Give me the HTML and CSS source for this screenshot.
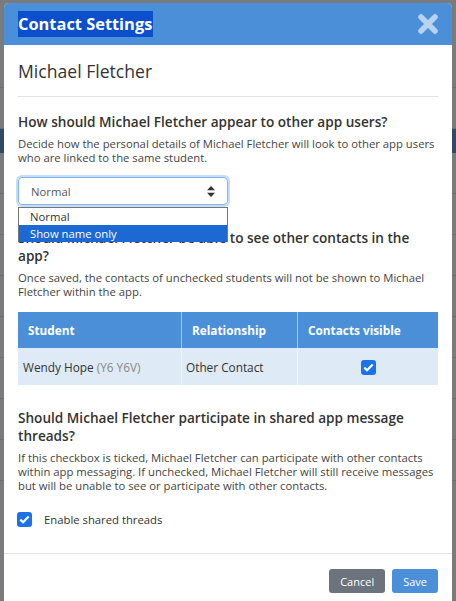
FILE: index.html
```html
<!DOCTYPE html>
<html lang="en">
<head>
    <meta charset="UTF-8">
    <meta name="viewport" content="width=device-width, initial-scale=1.0">
    <title>Contact Settings</title>
    <link rel="stylesheet" href="styles.css">
</head>
<body>
    <div class="backdrop">
        <div class="bg-row tall"></div>
        <div class="bg-row"></div>
        <div class="bg-row band"></div>
        <div class="bg-row"></div>
        <div class="bg-row"></div>
        <div class="bg-row"></div>
        <div class="bg-row"></div>
        <div class="bg-row"></div>
        <div class="bg-row"></div>
        <div class="bg-row"></div>
        <div class="bg-row"></div>
    </div>

    <div class="modal">
        <div class="modal-header">
            <span class="modal-title">Contact Settings</span>
            <svg class="close-icon" width="22" height="22" viewBox="0 0 22 22">
                <path d="M4 4 L18 18 M18 4 L4 18" stroke="#b8d2f0" stroke-width="5.5" stroke-linecap="round"/>
            </svg>
        </div>

        <div class="modal-body">
            <h2 class="contact-name">Michael Fletcher</h2>
            <hr>

            <h3>How should Michael Fletcher appear to other app users?</h3>
            <p>Decide how the personal details of Michael Fletcher will look to other app users who are linked to the same student.</p>

            <div class="select-wrap">
                <div class="select">
                    <span>Normal</span>
                    <svg width="8" height="11" viewBox="0 0 8 11">
                        <path d="M4 0 L8 4.2 L0 4.2 Z M0 6.8 L8 6.8 L4 11 Z" fill="#333"/>
                    </svg>
                </div>
                <ul class="options">
                    <li>Normal</li>
                    <li class="selected">Show name only</li>
                </ul>
            </div>

            <h3 class="second">Should Michael Fletcher be able to see other contacts in the app?</h3>
            <p>Once saved, the contacts of unchecked students will not be shown to Michael Fletcher within the app.</p>

            <table class="students">
                <thead>
                    <tr>
                        <th class="col-student">Student</th>
                        <th class="col-rel">Relationship</th>
                        <th class="col-vis">Contacts visible</th>
                    </tr>
                </thead>
                <tbody>
                    <tr>
                        <td class="col-student">Wendy Hope <span class="muted">(Y6 Y6V)</span></td>
                        <td class="col-rel">Other Contact</td>
                        <td class="col-vis center"><span class="check"><svg width="11" height="9" viewBox="0 0 11 9"><path d="M1.3 4.6 L4.1 7.3 L9.7 1.5" stroke="#fff" stroke-width="2.2" fill="none"/></svg></span></td>
                    </tr>
                </tbody>
            </table>

            <h3 class="third">Should Michael Fletcher participate in shared app message threads?</h3>
            <p>If this checkbox is ticked, Michael Fletcher can participate with other contacts within app messaging. If unchecked, Michael Fletcher will still receive messages but will be unable to see or participate with other contacts.</p>

            <label class="check-row">
                <span class="check"><svg width="11" height="9" viewBox="0 0 11 9"><path d="M1.3 4.6 L4.1 7.3 L9.7 1.5" stroke="#fff" stroke-width="2.2" fill="none"/></svg></span>
                Enable shared threads
            </label>
        </div>

        <div class="modal-footer">
            <button class="btn btn-cancel">Cancel</button>
            <button class="btn btn-save">Save</button>
        </div>
    </div>
</body>
</html>
```

FILE: styles.css
```css
body {
    margin: 0;
    padding: 0;
    height: 601px;
    overflow: hidden;
    background-color: #7a7b7c;
    font-family: 'Open Sans', sans-serif;
    color: #333;
}

.backdrop {
    display: flex;
    flex-direction: column;
}

.bg-row {
    height: 40px;
    border-bottom: 1px solid #6d6e70;
}

.bg-row.tall {
    height: 87px;
}

.bg-row.band {
    height: 24px;
    background-color: #2f4a68;
    border-bottom: 0;
}

.modal {
    position: absolute;
    top: 3px;
    left: 4px;
    width: 448px;
    height: 620px;
    background-color: #fff;
    border-radius: 5px;
    overflow: hidden;
    display: flex;
    flex-direction: column;
}

.modal-header {
    height: 42px;
    background-color: #4a8fd7;
    padding: 0 14px;
    display: flex;
    align-items: center;
    justify-content: space-between;
}

.modal-title {
    background-color: #0b4fcc;
    color: #fff;
    font-size: 16.4px;
    font-weight: bold;
    line-height: 26px;
    padding-right: 1px;
}

.close-icon {
    margin-right: -1px;
}

.modal-body {
    padding: 0 14px;
    flex-grow: 1;
}

.contact-name {
    font-size: 17.6px;
    font-weight: normal;
    margin: 13px 0 0;
    line-height: 26px;
    color: #333;
}

hr {
    border: 0;
    border-top: 1px solid #e3e3e3;
    margin: 12px 0 0;
}

h3 {
    font-size: 13.6px;
    font-weight: 600;
    line-height: 18px;
    margin: 16px 0 0;
    color: #333;
}

p {
    font-size: 11.3px;
    line-height: 14px;
    margin: 6px 0 0;
    color: #444;
}

.select-wrap {
    position: relative;
    width: 210px;
    margin-top: 12px;
}

.select {
    height: 28px;
    box-sizing: border-box;
    border: 1px solid #80b4ec;
    border-radius: 4px;
    box-shadow: 0 0 0 2px #c6dcf6;
    padding: 0 12px 0 12px;
    display: flex;
    align-items: center;
    justify-content: space-between;
    font-size: 11.3px;
    color: #555;
}

.options {
    position: absolute;
    top: 30px;
    left: 0;
    width: 100%;
    box-sizing: border-box;
    margin: 0;
    padding: 0;
    list-style: none;
    background-color: #fff;
    border: 1px solid #767676;
    border-bottom: 0;
    font-size: 11.3px;
    z-index: 2;
}

.options li {
    height: 17px;
    line-height: 17px;
    padding-left: 11px;
    color: #333;
}

.options li.selected {
    background-color: #1c69d3;
    color: #fff;
}

h3.second {
    margin-top: 24px;
}

.students {
    width: 100%;
    margin-top: 13px;
    border-collapse: collapse;
    font-size: 11.8px;
}

.students th {
    background-color: #4a8fd7;
    color: #fff;
    font-weight: bold;
    text-align: left;
    height: 36px;
    padding: 0 0 0 10px;
    border-left: 1px solid #a9c9ec;
}

.students td {
    background-color: #deeaf5;
    height: 37px;
    padding: 0 0 0 5px;
    border-left: 1px solid #f1f6fb;
    color: #333;
}

.students th:first-child,
.students td:first-child {
    border-left: 0;
}

.students td.col-rel {
    padding-left: 4px;
}

.col-student {
    width: 153px;
}

.col-rel {
    width: 105px;
}

.students td.center {
    text-align: center;
    padding: 0;
}

.muted {
    color: #888;
}

.check {
    display: inline-flex;
    align-items: center;
    justify-content: center;
    width: 15px;
    height: 15px;
    border-radius: 3px;
    background-color: #1a73e8;
    vertical-align: middle;
}

h3.third {
    margin-top: 24px;
}

.check-row {
    display: flex;
    align-items: center;
    gap: 12px;
    margin-top: 19px;
    font-size: 11.3px;
    color: #333;
    padding-left: 0;
}

.check-row .check {
    margin-left: -1px;
}

.modal-footer {
    border-top: 1px solid #e3e3e3;
    padding: 15px 14px 30px;
    display: flex;
    justify-content: flex-end;
    gap: 7px;
}

.btn {
    height: 24px;
    border: 0;
    border-radius: 3px;
    color: #fff;
    font-family: 'Open Sans', sans-serif;
    font-size: 11px;
    padding: 0 10px;
    cursor: pointer;
}

.btn-cancel {
    background-color: #6b737c;
    padding: 0 11px;
}

.btn-save {
    background-color: #4a8fd7;
    padding: 0 11px;
}
```
